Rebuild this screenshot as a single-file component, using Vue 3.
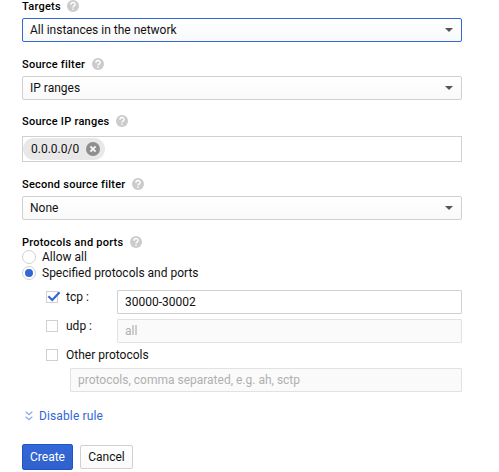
<script setup>
import { ref, h } from 'vue'

const radio = ref('specified')
const tcp = ref(true)
const udp = ref(false)
const other = ref(false)

const HelpIcon = () =>
  h('svg', { width: 12, height: 12, viewBox: '0 0 12 12' }, [
    h('circle', { cx: 6, cy: 6, r: 6, fill: '#cbcbcb' }),
    h('path', {
      d: 'M3.9 4.7C3.9 1.8 8.1 1.8 8.1 4.4C8.1 5.8 6 5.9 6 7.6',
      fill: 'none', stroke: '#fff', 'stroke-width': 1.4
    }),
    h('rect', { x: 5.3, y: 8.5, width: 1.4, height: 1.4, fill: '#fff' })
  ])
</script>

<template>
  <form class="form" @submit.prevent>
    <div class="field">
      <div class="label">Targets<HelpIcon /></div>
      <div class="select focused"><span>All instances in the network</span><i class="arrow"></i></div>
    </div>
    <div class="field tight">
      <div class="label">Source filter<HelpIcon /></div>
      <div class="select"><span>IP ranges</span><i class="arrow"></i></div>
    </div>
    <div class="field ranges">
      <div class="label">Source IP ranges<HelpIcon /></div>
      <div class="chips">
        <span class="chip">0.0.0.0/0
          <svg width="14" height="14" viewBox="0 0 14 14">
            <circle cx="7" cy="7" r="7" fill="#8e8e8e" />
            <path d="M4.4 4.4L9.6 9.6M9.6 4.4L4.4 9.6" stroke="#f4f4f4" stroke-width="2" />
          </svg>
        </span>
      </div>
    </div>
    <div class="field">
      <div class="label">Second source filter<HelpIcon /></div>
      <div class="select"><span>None</span><i class="arrow"></i></div>
    </div>
    <div class="label">Protocols and ports<HelpIcon /></div>
    <div class="radios">
      <label class="radio"><i class="dot" :class="{ on: radio === 'all' }" @click="radio = 'all'"></i>Allow all</label>
      <label class="radio"><i class="dot" :class="{ on: radio === 'specified' }" @click="radio = 'specified'"></i>Specified protocols and ports</label>
    </div>
    <div class="protocols">
      <div class="row">
        <label class="check" @click="tcp = !tcp">
          <i class="box"><svg v-if="tcp" width="15" height="12" viewBox="0 0 15 12"><path d="M1.4 5.2L5.3 9L12.6 1.3" fill="none" stroke="#3367d6" stroke-width="2.1" /></svg></i>tcp :
        </label>
        <input class="input" value="30000-30002">
      </div>
      <div class="row">
        <label class="check" @click="udp = !udp"><i class="box"></i>udp :</label>
        <input class="input" placeholder="all" disabled>
      </div>
      <label class="check other" @click="other = !other"><i class="box"></i>Other protocols</label>
      <input class="input wide" placeholder="protocols, comma separated, e.g. ah, sctp" disabled>
    </div>
    <a class="disable">
      <svg width="8" height="10" viewBox="0 0 8 10">
        <path d="M0.7 0.7L4 3.7L7.3 0.7M0.7 5.7L4 8.7L7.3 5.7" fill="none" stroke="#8eabe8" stroke-width="1.3" />
      </svg>Disable rule
    </a>
    <div class="actions">
      <button class="btn primary">Create</button>
      <button class="btn">Cancel</button>
    </div>
  </form>
</template>

<style>
body { background: #fff; overflow: hidden; }
</style>

<style scoped>
.form, .form * { box-sizing: border-box; }
.form {
  width: 440px;
  margin-left: 22px;
  font: 12px/16px Roboto, sans-serif;
  color: #111;
}
.field { margin-bottom: 16px; }
.field.tight { margin-bottom: 15px; }
.label {
  display: flex;
  align-items: flex-start;
  gap: 6.3px;
  height: 12px;
  margin-bottom: 6px;
  font-size: 11px;
  font-weight: 500;
  line-height: 14px;
  letter-spacing: 0.24px;
  color: #000;
}
.ranges .label { margin-bottom: 9px; }
.select {
  display: flex;
  align-items: center;
  justify-content: space-between;
  height: 24px;
  padding: 0 8px 0 7px;
  border: 1px solid #d0d0d0;
  border-radius: 2px;
  background: linear-gradient(#fff, #f9f9f9);
}
.select.focused { border-color: #3367d6; }
.arrow {
  border: 4px solid transparent;
  border-top-color: #555;
  border-bottom: 0;
}
.chips {
  height: 26px;
  padding: 1px 0;
  border: 1px solid #d0d0d0;
}
.chip {
  display: flex;
  align-items: center;
  justify-content: space-between;
  width: 82px;
  height: 22px;
  padding: 0 5px 0 8px;
  border-radius: 11px;
  background: #e8e8e8;
}
.radios { margin-top: -5px; }
.radio { display: flex; align-items: center; gap: 6px; height: 16px; }
.dot {
  display: flex;
  align-items: center;
  justify-content: center;
  width: 14px;
  height: 14px;
  border: 1px solid #d0d0d0;
  border-radius: 50%;
}
.dot.on::after {
  content: '';
  width: 8px;
  height: 8px;
  border-radius: 50%;
  background: #3367d6;
}
.protocols { padding: 9px 0 0 24px; }
.row { display: flex; height: 24px; margin-bottom: 5px; }
.check { display: flex; align-items: center; gap: 8px; width: 71px; height: 14px; }
.check.other { width: 200px; }
.box { width: 12px; height: 12px; border: 1px solid #d0d0d0; }
.box svg { display: block; margin: -1px 0 0; overflow: visible; }
.input {
  flex: 1;
  min-width: 0;
  height: 24px;
  padding: 0 7px;
  border: 1px solid #d0d0d0;
  border-radius: 1px;
  background: #fff;
  font: inherit;
  color: #111;
}
.input:disabled { border-color: #e2e2e2; background: #fafafa; }
.input::placeholder { color: #b0b0b0; opacity: 1; }
.input.wide { display: block; width: 392px; margin: 6px 0 0 24px; }
.disable {
  display: flex;
  align-items: center;
  gap: 6px;
  height: 16px;
  margin-top: 16px;
  padding-left: 3px;
  letter-spacing: 0.12px;
  color: #3367d6;
}
.actions { display: flex; align-items: center; gap: 7px; margin-top: 20px; }
.btn {
  width: 53px;
  height: 24px;
  padding: 0;
  border: 1px solid #d0d0d0;
  border-radius: 2px;
  background: linear-gradient(#fff, #fafafa);
  font: inherit;
  color: #111;
}
.btn.primary {
  width: 51px;
  height: 26px;
  border-color: #1a56c8;
  background: linear-gradient(#3468d7, #3061cc);
  color: #fff;
}
</style>
